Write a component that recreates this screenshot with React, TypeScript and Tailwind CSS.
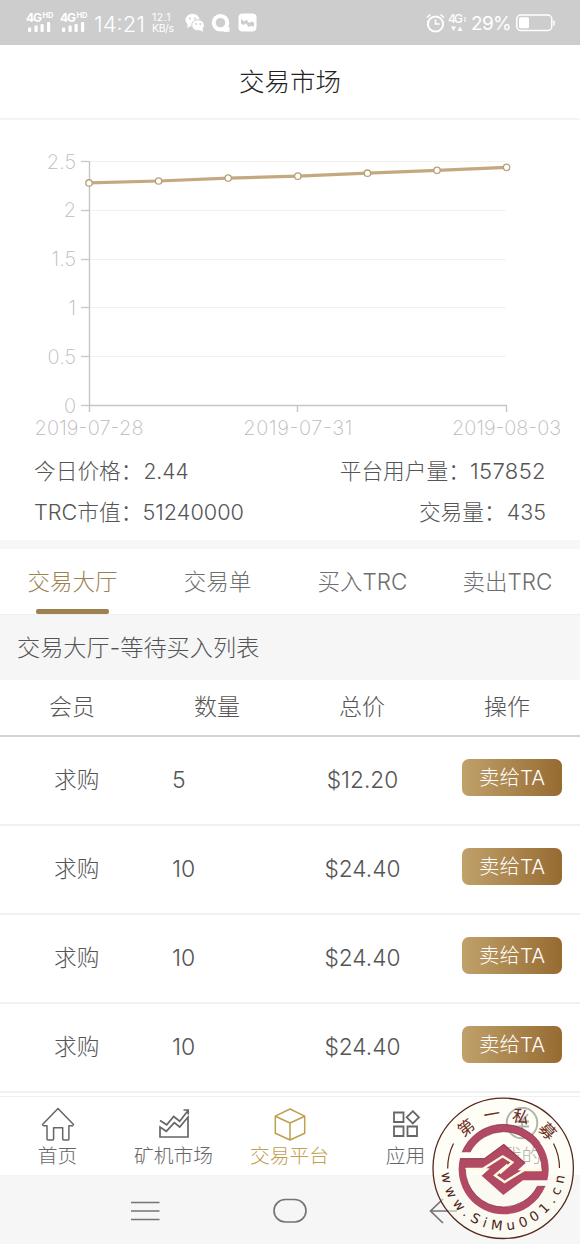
import React from "react";

interface Order {
    member: string,
    amount: number,
    total: string,
}

interface NavItemProps {
    label: string,
    icon: React.ReactNode,
    active?: boolean,
}

const prices = [
    { date: "2019-07-28", value: 2.28 },
    { date: "2019-07-29", value: 2.3 },
    { date: "2019-07-30", value: 2.33 },
    { date: "2019-07-31", value: 2.35 },
    { date: "2019-08-01", value: 2.38 },
    { date: "2019-08-02", value: 2.41 },
    { date: "2019-08-03", value: 2.44 },
];

const tabs = ["交易大厅", "交易单", "买入TRC", "卖出TRC"];

const columns = ["会员", "数量", "总价", "操作"];

const orders: Order[] = [
    { member: "求购", amount: 5, total: "$12.20" },
    { member: "求购", amount: 10, total: "$24.40" },
    { member: "求购", amount: 10, total: "$24.40" },
    { member: "求购", amount: 10, total: "$24.40" },
];

function Signal() {
    return (
        <svg width="28" height="22" viewBox="0 0 28 22" fill="#fff" className="overflow-visible">
            <text x="0" y="9.5" fontSize="12" fontWeight="700" textLength="16">4G</text>
            <text x="16.5" y="6" fontSize="7.5" fontWeight="700" textLength="11">HD</text>
            <rect x="2" y="15.5" width="3.2" height="4.5" rx="1" />
            <rect x="8.5" y="13.5" width="3.2" height="6.5" rx="1" />
            <rect x="14.5" y="12" width="3.2" height="8" rx="1" />
            <rect x="21" y="10" width="3.2" height="10" rx="1" />
        </svg>
    )
}

function StatusBar() {
    return (
        <div className="h-[45px] flex items-center bg-[#cdcdcd] text-white pl-[26px] pr-[25px]">
            <Signal />
            <div className="w-[6px]" />
            <Signal />
            <span className="ml-[6px] w-[52px] text-[22px] leading-none whitespace-nowrap font-light mt-[2px]">14:21</span>
            <div className="ml-[6px] w-[25px] flex flex-col text-[10.5px] leading-[11px] whitespace-nowrap mt-[1px]">
                <span className="tracking-[0.5px]">12.1</span>
                <span className="tracking-[-0.4px]">KB/s</span>
            </div>
            {/* wechat */}
            <svg className="ml-[8px]" width="20" height="20" viewBox="0 0 20 20">
                <ellipse cx="7.5" cy="7" rx="7" ry="6.3" fill="#fff" />
                <path d="M3 11l-1 4 4-2z" fill="#fff" />
                <ellipse cx="13" cy="12.3" rx="6.3" ry="5.6" fill="#fff" stroke="#cdcdcd" strokeWidth="1" />
                <path d="M15 17l3 2-.5-4z" fill="#fff" />
                <g fill="#cdcdcd">
                    <circle cx="5" cy="5.4" r="1" />
                    <circle cx="10" cy="5.4" r="1" />
                    <circle cx="11" cy="11" r=".9" />
                    <circle cx="15.3" cy="11" r=".9" />
                </g>
            </svg>
            <svg className="ml-[6px]" width="20" height="20" viewBox="0 0 20 20">
                <circle cx="9.5" cy="9.7" r="6.8" fill="none" stroke="#fff" strokeWidth="4" />
                <path d="M11 14l7.5 0v4.7l-6 .2z" fill="#fff" />
            </svg>
            <svg className="ml-[7px]" width="19" height="19" viewBox="0 0 19 19">
                <rect x=".5" y=".5" width="18" height="18" rx="4" fill="#fff" />
                <path d="M3 6l3.500 2.500L8.500 6.500l2.500 3.500 2.500-1.500 2.500 1v4l-3-.5-2.500 1-2.500-3.500-2.500 1.500L3 10.500z" fill="#cdcdcd" />
            </svg>
            <div className="flex-1" />
            <svg width="19" height="20" viewBox="0 0 19 20" fill="none" stroke="#fff" strokeWidth="2">
                <circle cx="9.5" cy="11" r="7.6" />
                <path d="M9.5 6.5V11h4.2M1 4.500L4.500 1.500M14.500 1.500L18 4.500" strokeWidth="1.6" />
            </svg>
            <svg className="ml-[3px]" width="20" height="22" viewBox="0 0 20 22" fill="#fff">
                <text x="0" y="10.5" fontSize="12" fontWeight="500" textLength="15">4G</text>
                <path d="M16.500 5h1v5h-1zM3 14.500h5l-2.500 4.500zM9.500 19h5L12 14.500z" />
            </svg>
            <span className="ml-[3px] w-[41px] text-[19px] leading-none whitespace-nowrap tracking-[-0.7px] mt-[1px]">29%</span>
            <svg className="ml-[4px]" width="39" height="18" viewBox="0 0 39 18">
                <rect x=".8" y="1" width="35" height="15.5" rx="4" fill="none" stroke="#fff" strokeWidth="1.5" />
                <rect x="3" y="3.2" width="10" height="11" rx="1.5" fill="#fff" />
                <path d="M38 6.500v5" stroke="#fff" strokeWidth="1.5" />
            </svg>
        </div>
    )
}

function PriceChart() {
    const x = (i: number) => 89 + i * 69.6;
    const y = (v: number) => 285.5 - v * 97.6;

    return (
        <svg width="580" height="328" viewBox="0 0 580 328" className="block">
            {[0.5, 1, 1.5, 2, 2.5].map((v) => (
                <path key={v} d={`M90 ${Math.floor(y(v)) + 0.5}H506`} stroke="#f3f1eb" />
            ))}
            {[0, 0.5, 1, 1.5, 2, 2.5].map((v) => (
                <g key={v}>
                    <path d={`M81 ${Math.floor(y(v)) + 0.5}H89`} stroke="#cacaca" strokeWidth="1.4" />
                    <text x="76" y={y(v) + 7} textAnchor="end" fontSize="20" fontWeight="200" fill="#bdbbbd">{v}</text>
                </g>
            ))}
            <path d="M89.500 41V292M89 285.500H507M297.500 285V292M506.500 285V292" stroke="#c6c6c8" strokeWidth="1.4" fill="none" />
            <polyline points={prices.map((p, i) => `${x(i)},${y(p.value)}`).join(" ")} fill="none" stroke="#c4a980" strokeWidth="3.2" />
            {prices.map((p, i) => (
                <circle key={p.date} cx={x(i)} cy={y(p.value)} r="3.2" fill="#fffef8" stroke="#b5a17c" strokeWidth="1.3" />
            ))}
            {[0, 3, 6].map((i) => (
                <text key={i} x={x(i)} y="314.5" textAnchor="middle" fontSize="20" textLength="109" fontWeight="200" fill="#bdb8bd">{prices[i].date}</text>
            ))}
        </svg>
    )
}

function NavItem({ label, icon, active }: NavItemProps) {
    return (
        <div className={`flex flex-col items-center ${active ? "text-[#bfa04e]" : "text-[#666]"}`}>
            <div className="h-[34px] flex items-center">{icon}</div>
            <span className="text-[19.8px] leading-[30px] font-light -ml-px">{label}</span>
        </div>
    )
}

const iconProps = {
    width: 34,
    height: 34,
    viewBox: "0 0 34 34",
    fill: "none",
    stroke: "currentColor",
    strokeWidth: 1.5,
};

function HomeIcon() {
    return (
        <svg {...iconProps} strokeLinejoin="round">
            <path d="M17 1.500L32.500 17.500l-1 1.200h-3.600V32q0 1-1 1h-4.200q-1 0-1-1V20.700H12.600V32q0 1-1 1H7q-1 0-1-1V18.700H2.500l-1-1.200z" />
        </svg>
    )
}

function MarketIcon() {
    return (
        <svg {...iconProps} strokeWidth={1.7}>
            <path d="M3 13.500l6.700 4.300 7-8.300 6 4.700L31 3.500M26.500 3h4.700v4.500" />
            <path d="M3 30V20l6.300 4.300L17.300 15.700l5.400 4.300 8.300-10v20z" />
        </svg>
    )
}

function CubeIcon() {
    return (
        <svg {...iconProps} strokeLinejoin="round">
            <path d="M17 2l14.700 7.200v17L17 33 2.300 26.200v-17zM2.300 9.200L17 16l14.700-6.800M17 16v17" />
        </svg>
    )
}

function AppsIcon() {
    return (
        <svg {...iconProps} strokeWidth={1.8}>
            <path d="M5 5.500h9.500v9.500H5zM5 19.500h9.500V29H5zM18.500 19.500h9.500V29h-9.500zM23.800 4.200l6.100 6.100-6.100 6.100-6.100-6.100z" />
        </svg>
    )
}

function MineIcon() {
    return (
        <svg {...iconProps} stroke="#5f676c" strokeWidth={1.9}>
            <circle cx="17" cy="16" r="15.3" />
            <path d="M11 7l6 7 6-7M10 14.500h14M10 19.500h14M17 14v11" />
        </svg>
    )
}

const sealText = [
    { char: "第", x: 41, y: 37.6, angle: -38 },
    { char: "一", x: 66.8, y: 24.3, angle: -10 },
    { char: "私", x: 95.8, y: 26.5, angle: 12 },
    { char: "募", x: 122.6, y: 41, angle: 46 },
];

// round seal floating over the bottom right corner
function Seal() {
    return (
        <svg className="absolute left-[425px] top-[1090px] pointer-events-none" width="155" height="154" viewBox="0 0 155 154">
            <circle cx="78.2" cy="78.3" r="70.2" fill="#fffdee" fillOpacity=".5" stroke="#55281c" strokeWidth="1.3" />
            <path d="M22.700 78.500A55.500 55.500 0 0 1 28.500 53.500M134.500 78A55.500 55.500 0 0 0 128.500 53.500" fill="none" stroke="#55281c" strokeWidth="1.2" />
            {sealText.map((t) => (
                <text key={t.char} x={t.x} y={t.y} transform={`rotate(${t.angle} ${t.x} ${t.y})`} textAnchor="middle" dominantBaseline="central" fontSize="16.5" fontWeight="400" fill="#6b2a1c">{t.char}</text>
            ))}
            <path id="seal-arc" d="M16.300 80A62 62 0 0 0 78.200 140.300A62 62 0 0 0 140.100 80" fill="none" />
            <text fontFamily="DejaVu Sans" fontSize="13.5" fill="#4c2419">
                <textPath href="#seal-arc" textLength="182" startOffset="3">www.SiMu001.cn</textPath>
            </text>
            <g transform="scale(.3333)">
                <g fill="#b24a64">
                    <path d="M111 187A135 135 0 0 1 236 103A135 135 0 0 1 367 271H294L235 315 170 257 200 230 292 242H351A115 115 0 0 0 236 125A115 115 0 0 0 135 187z" />
                    <path d="M361 289A135 135 0 0 1 236 373A135 135 0 0 1 105 205H178L237 161 302 219 272 246 180 234H121A115 115 0 0 0 236 351A115 115 0 0 0 337 289z" />
                </g>
                <path d="M135 187A115 115 0 0 1 236 125A115 115 0 0 1 351 241M111 187A135 135 0 0 1 236 103A135 135 0 0 1 345 158M121 237A115 115 0 0 0 236 351A115 115 0 0 0 337 289H361M105 206H178L235 164 300 219" fill="none" stroke="#74283c" strokeOpacity=".6" strokeWidth="3" />
                {/* the two hooks interlock in the middle */}
                <path d="M123 237H173L233 199 262 217 224 250" fill="none" stroke="#fffbe0" strokeWidth="7" />
                <path d="M349 240H298L239 276 210 256 248 224" fill="none" stroke="#fffbe0" strokeWidth="7" />
            </g>
        </svg>
    )
}

export default function App() {
    return (
        <div className="relative w-[580px] h-[1244px] overflow-hidden bg-white text-[#555] font-[Inter,'Noto_Sans_CJK_SC',sans-serif]">
            <StatusBar />
            <header className="h-[75px] flex items-center justify-center border-b-2 border-[#f4f4f4] text-[25.5px] leading-[73px] text-[#222] font-light">
                交易市场
            </header>

            <PriceChart />

            <section className="h-[93px] pl-[34px] pr-[34px] pt-[4px] -mt-px text-[21.7px] leading-10 font-light whitespace-nowrap">
                <div className="flex justify-between">
                    <p>今日价格：<span className="ml-px text-[21px]">2.44</span></p>
                    <p>平台用户量：<span className="text-[22px] tracking-[0.4px]">157852</span></p>
                </div>
                <div className="flex justify-between">
                    <p>TRC市值：<span className="text-[21.7px]">51240000</span></p>
                    <p>交易量：<span className="ml-px text-[21.5px]">435</span></p>
                </div>
            </section>
            <div className="h-[9px] bg-[#f7f7f7]" />

            <nav className="h-[66px] grid grid-cols-4 border-b border-[#eee] text-[22.5px] font-light text-[#6e6e6e]">
                {tabs.map((tab, i) => (
                    <div key={tab} className={`flex flex-col items-center ${i === 0 ? "text-[#9c8250]" : ""}`}>
                        <span className="h-[60px] leading-[66px] whitespace-nowrap">{tab}</span>
                        {i === 0 && <div className="w-[73px] h-[5px] rounded-[2px] bg-[#9c8250]" />}
                    </div>
                ))}
            </nav>

            <h2 className="h-[65px] pl-[17px] bg-[#f6f6f6] text-[23.2px] leading-[67px] font-light">交易大厅-等待买入列表</h2>

            <div className="h-[57px] grid grid-cols-4 text-center text-[23px] leading-[54px] font-light border-b-2 border-[#d4d4d4]">
                {columns.map((column) => <span key={column} className="-ml-px">{column}</span>)}
            </div>

            {orders.map((order, i) => (
                <div key={i} className="h-[89px] grid grid-cols-4 items-center text-[22.7px] font-light border-b-2 border-[#f1f1f1]">
                    <span className="pl-[54px]">{order.member}</span>
                    <span className="pl-[27px] text-[23px]">{order.amount}</span>
                    <span className="text-center">{order.total}</span>
                    <button className="ml-[27px] -mt-[6px] w-[100px] h-[37px] rounded-[7px] bg-linear-to-r from-[#c0a16a] to-[#966b32] text-white text-[20.5px] leading-[35px] font-light">
                        卖给TA
                    </button>
                </div>
            ))}

            <footer className="mt-[3px] h-[81px] pt-[10px] grid grid-cols-5 border-t border-[#f0f0f0] border-b-2 border-b-[#f4f4f4]">
                <NavItem label="首页" icon={<HomeIcon />} />
                <NavItem label="矿机市场" icon={<MarketIcon />} />
                <NavItem label="交易平台" icon={<CubeIcon />} active />
                <NavItem label="应用" icon={<AppsIcon />} />
                <NavItem label="我的" icon={<MineIcon />} />
            </footer>

            <div className="h-[70px] flex items-center bg-[#f6f6f6] pl-[131px] pb-[2px]">
                <svg width="29" height="20" viewBox="0 0 29 20" stroke="#747478" strokeWidth="1.7">
                    <path d="M0 1.500h28.500M0 10h28.500M0 18.500h28.500" />
                </svg>
                <svg className="ml-[113px]" width="34" height="26" viewBox="0 0 34 26" fill="none" stroke="#747478" strokeWidth="1.7">
                    <rect x="1" y="1.5" width="32" height="22.5" rx="11.2" />
                </svg>
                <svg className="ml-[122px]" width="28" height="26" viewBox="0 0 28 26" fill="none" stroke="#747478" strokeWidth="1.7">
                    <path d="M14 1L1.500 13 14 25M1.500 13H28" />
                </svg>
            </div>
            <Seal />
        </div>
    )
}
